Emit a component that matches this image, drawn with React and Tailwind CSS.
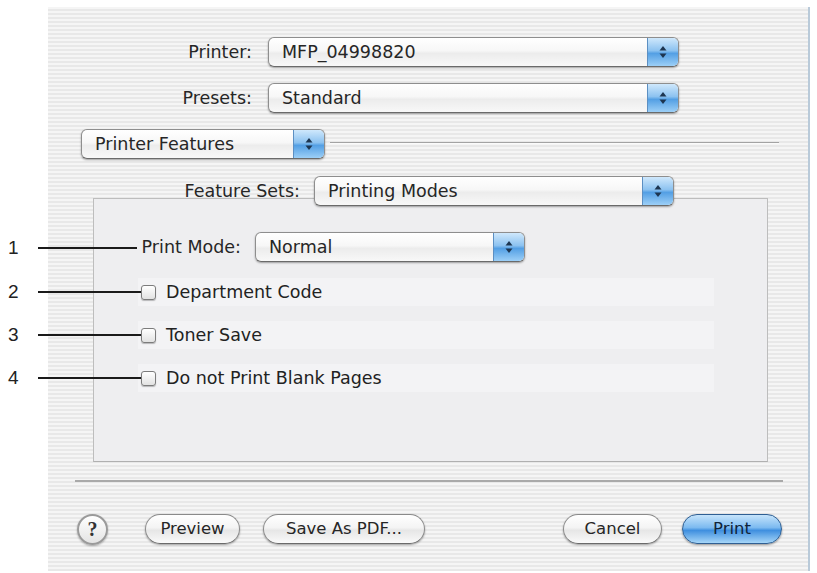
import React from "react";

function Stepper() {
  return (
    <div className="flex w-[31px] items-center justify-center rounded-r-[5px] border-l border-[#5c8fc2] bg-[linear-gradient(180deg,#cfe8fc_0%,#8cc2f0_45%,#539fe4_55%,#9ccff7_100%)]">
      <svg width="8" height="14" viewBox="0 0 8 14">
        <polygon points="4,1 7.5,5.5 0.5,5.5" fill="#1d3550" />
        <polygon points="4,13 7.5,8.5 0.5,8.5" fill="#1d3550" />
      </svg>
    </div>
  );
}

function Popup({ text, className }) {
  return (
    <div
      className={`flex h-[30px] items-stretch rounded-[6px] border border-[#8e8e8e] border-b-[#6a6a6a] bg-[linear-gradient(180deg,#ffffff_0%,#f7f7f7_45%,#ececec_55%,#f8f8f8_100%)] shadow-[0_1px_2px_rgba(0,0,0,0.35)] ${className}`}
    >
      <div className="flex flex-1 items-center pl-[13px] text-[17.5px] text-[#262626]">{text}</div>
      <Stepper />
    </div>
  );
}

function Checkbox() {
  return (
    <div className="h-[15px] w-[15px] rounded-[3px] border border-[#7c7c7c] bg-[linear-gradient(180deg,#ffffff,#e2e2e2)] shadow-[0_1px_1px_rgba(0,0,0,0.25)]" />
  );
}

function PillButton({ children, className }) {
  return (
    <div
      className={`flex h-[30px] items-center justify-center rounded-full border border-[#8a8a8a] border-b-[#6a6a6a] bg-[linear-gradient(180deg,#ffffff_0%,#f4f4f4_45%,#e6e6e6_55%,#fafafa_100%)] text-[16.5px] text-[#262626] shadow-[0_1px_2px_rgba(0,0,0,0.35)] ${className}`}
    >
      {children}
    </div>
  );
}

function Callout({ n, top, end }) {
  return (
    <div className="absolute left-0 flex items-center" style={{ top: top - 12 }}>
      <div className="w-[30px] pl-[8px] font-['Liberation_Sans',Arial,sans-serif] text-[19px] leading-[24px] text-[#222]">
        {n}
      </div>
      <div className="h-[2px] bg-[#1a1a1a]" style={{ width: end - 38, marginLeft: 8 }} />
    </div>
  );
}

export default function App() {
  return (
    <div className="relative flex h-[573px] w-[817px] overflow-hidden bg-white font-['DejaVu_Sans','Open_Sans',sans-serif]">
      <div className="ml-[48px] mt-[7px] flex h-[564px] w-[762px] flex-col border-r-2 border-[#b9cad9] bg-[repeating-linear-gradient(180deg,#f5f5f5_0px,#f5f5f5_2px,#e8e8e8_2px,#e8e8e8_4px)]">
        {/* Printer */}
        <div className="mt-[30px] flex items-center">
          <div className="w-[204px] text-right text-[17.5px] text-[#262626]">Printer:</div>
          <Popup text="MFP_04998820" className="ml-[16px] w-[411px]" />
        </div>
        {/* Presets */}
        <div className="mt-[16px] flex items-center">
          <div className="w-[204px] text-right text-[17.5px] text-[#262626]">Presets:</div>
          <Popup text="Standard" className="ml-[16px] w-[411px]" />
        </div>
        {/* Printer Features */}
        <div className="mt-[16px] flex items-center">
          <Popup text="Printer Features" className="ml-[33px] w-[244px]" />
          <div className="ml-[5px] mt-[-3px] h-[2px] w-[449px] bg-[linear-gradient(180deg,#a3a3a3_50%,#fbfbfb_50%)]" />
        </div>
        {/* Feature Sets */}
        <div className="relative z-10 mt-[17px] flex items-center">
          <div className="w-[252px] text-right text-[17.5px] text-[#262626]">Feature Sets:</div>
          <Popup text="Printing Modes" className="ml-[14px] w-[360px]" />
        </div>
        {/* Group box */}
        <div className="ml-[45px] mt-[-8px] flex h-[264px] w-[675px] flex-col border border-[#bdbdbd] border-b-[#b0b0b0] bg-[#eeeef0]">
          <div className="mt-[33px] flex items-center">
            <div className="w-[147px] text-right text-[17.5px] text-[#262626]">Print Mode:</div>
            <Popup text="Normal" className="ml-[14px] w-[270px]" />
          </div>
          {[
            ["Department Code", "mt-[16px]"],
            ["Toner Save", "mt-[15px]"],
            ["Do not Print Blank Pages", "mt-[15px]"],
          ].map(([label, mt]) => (
            <div
              key={label}
              className={`${mt} ml-[44px] flex h-[28px] w-[576px] items-center bg-[#f3f3f5] pl-[3px]`}
            >
              <Checkbox />
              <div className="ml-[10px] text-[17.5px] text-[#222]">{label}</div>
            </div>
          ))}
        </div>
        {/* separator */}
        <div className="ml-[27px] mt-[18px] h-[2px] w-[708px] bg-[#a9a9a9]" />
        {/* buttons */}
        <div className="mt-[31px] flex h-[32px] items-center">
          <div className="ml-[29px] flex h-[31px] w-[31px] items-center justify-center rounded-full border-2 border-[#9a9a9a] bg-[linear-gradient(180deg,#ffffff,#e4e4e4)] font-['Liberation_Serif',serif] text-[20px] font-bold text-[#333] shadow-[0_1px_2px_rgba(0,0,0,0.3)]">
            ?
          </div>
          <PillButton className="ml-[37px] w-[95px]">Preview</PillButton>
          <PillButton className="ml-[23px] w-[162px]">Save As PDF...</PillButton>
          <PillButton className="ml-[138px] w-[99px]">Cancel</PillButton>
          <div className="ml-[20px] flex h-[30px] w-[100px] items-center justify-center rounded-full border border-[#2f5f93] bg-[linear-gradient(180deg,#c6e4fb_0%,#7cbaf0_45%,#3f8fdf_55%,#a6d6f8_100%)] text-[16.5px] text-[#10243a] shadow-[0_1px_2px_rgba(0,0,0,0.4)]">
            Print
          </div>
        </div>
      </div>
      <Callout n="1" top={248} end={137} />
      <Callout n="2" top={292} end={141} />
      <Callout n="3" top={335} end={141} />
      <Callout n="4" top={378} end={141} />
    </div>
  );
}
